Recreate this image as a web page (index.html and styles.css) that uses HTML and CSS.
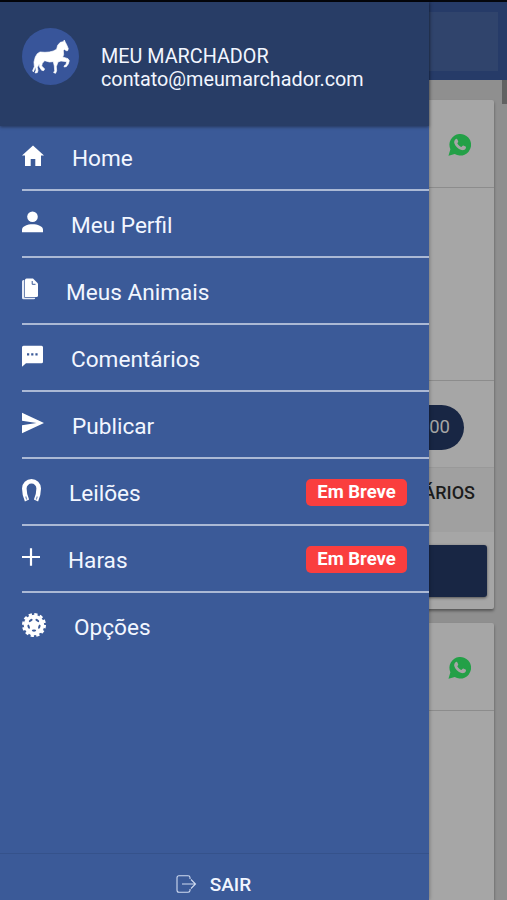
FILE: index.html
```html
<!DOCTYPE html>
<html lang="pt-BR">
<head>
  <meta charset="UTF-8" />
  <meta name="viewport" content="width=device-width, initial-scale=1.0"/>
  <title>Meu Marchador</title>
  <link rel="stylesheet" href="styles.css">
</head>
<body>
  <div class="page">
    <div class="topbar"><div class="search"></div></div>
    <div class="feed">
      <div class="card">
        <div class="card-head">
          <svg class="whatsapp" viewBox="0 0 24 24"><path fill="#23a047" d="M.5 23.800 2.500 17A11.300 11.300 0 1 1 7 22Z"/><path fill="#a6a6a6" d="M8.200 6.200c.5-.5 1.200-.4 1.500.3l.9 2.100c.2.500.1.800-.9 2 1 1.900 2.500 3.200 4.400 4 .8-.8 1.200-1.800 1.900-1.500l2.300 1.100c.7.400.5 1.200.2 1.900-.7 1.500-2.700 2.100-4.400 1.600-3.700-1-6.700-3.900-7.600-7.300-.3-1.600.4-3.200 1.700-4.200z"/></svg>
        </div>
        <div class="card-photo"></div>
        <div class="card-price"><span class="price">00</span></div>
        <div class="card-comments">ÁRIOS</div>
        <div class="card-action"><div class="button"></div></div>
      </div>
      <div class="card">
        <div class="card-head">
          <svg class="whatsapp" viewBox="0 0 24 24"><path fill="#23a047" d="M.5 23.800 2.500 17A11.300 11.300 0 1 1 7 22Z"/><path fill="#a6a6a6" d="M8.200 6.200c.5-.5 1.200-.4 1.500.3l.9 2.100c.2.500.1.800-.9 2 1 1.900 2.500 3.200 4.400 4 .8-.8 1.200-1.800 1.900-1.500l2.300 1.100c.7.400.5 1.200.2 1.900-.7 1.500-2.700 2.100-4.400 1.600-3.700-1-6.700-3.900-7.600-7.300-.3-1.600.4-3.200 1.700-4.200z"/></svg>
        </div>
        <div class="card-photo"></div>
      </div>
    </div>
    <div class="scroll-thumb"></div>
  </div>

  <div class="menu">
    <div class="menu-header">
      <svg class="avatar" viewBox="0 0 57 57">
        <circle cx="28.500" cy="28.500" r="28.500" fill="#38559a"/>
        <path fill="#fff" stroke="#fff" stroke-width="2" transform="translate(8 10) scale(.333)" d="M10 102 8 98 13 86 12 72 16 57 22 47 30 42 45 43 58 42 70 39 80 34 83 22 91 13 100 11 103 6 106 13 110 20 115 32 113 38 109 38 103 34 100 38 101 50 98 57 114 62 118 68 115 78 109 86 102 87 104 82 108 80 110 71 93 69 84 72 79 86 80 98 77 106 71 104 74 98 73 84 70 71 58 72 44 68 37 76 35 84 44 93 41 98 35 97 28 86 28 77 22 88 24 98 22 104 15 105 18 97 17 86Z"/>
      </svg>
      <div class="user">
        <div class="user-name">MEU MARCHADOR</div>
        <div class="user-mail">contato@meumarchador.com</div>
      </div>
    </div>

    <div class="menu-list">
      <div class="item">
        <svg width="22" height="22" viewBox="0 0 22 22"><path fill="#fff" d="M11 .5 22 10.500h-3V21h-5.700v-7H8.700v7H3V10.500H0z"/></svg>
        <span class="label">Home</span>
      </div>
      <div class="item">
        <svg width="21" height="22" viewBox="0 0 21 22"><circle cx="10.500" cy="5.800" r="5.300" fill="#fff"/><path fill="#fff" d="M0 21.300v-2.500c0-3.600 5.500-5.500 10.500-5.500S21 15.200 21 18.800v2.500z"/></svg>
        <span class="label">Meu Perfil</span>
      </div>
      <div class="item">
        <svg width="16" height="22" viewBox="0 0 16 22"><path fill="#fff" d="M4.500.5H11l5 5V17.500q0 1.500-1.500 1.500H3V2Q3 .5 4.500.5z"/><path fill="none" stroke="#3b5a98" d="M10.200 3v3.300h3.300"/><path fill="#e6ebf6" d="M0 3.500Q0 2 1.500 2H2.300v17.700h10.900v.3q0 1.300-1.500 1.300H1.500Q0 21.300 0 19.800z"/></svg>
        <span class="label">Meus Animais</span>
      </div>
      <div class="item">
        <svg width="21" height="22" viewBox="0 0 21 22"><path fill="#fff" d="M1.500.8h18Q21 .8 21 2.300v14.500q0 1.500-1.500 1.500H4L0 21.800V2.300Q0 .8 1.500.8z"/><path fill="#3b5a98" d="M5 8.200h2.200v2.200H5zm4.200 0h2.200v2.200H9.200zm4.200 0h2.200v2.200h-2.200z"/></svg>
        <span class="label">Comentários</span>
      </div>
      <div class="item">
        <svg width="22" height="22" viewBox="0 0 22 22"><path fill="#fff" d="M0 .8 22 11 0 21.300v-8L14.500 11 0 8.800z"/></svg>
        <span class="label">Publicar</span>
      </div>
      <div class="item">
        <svg width="19" height="23" viewBox="0 0 19 23"><path fill="none" stroke="#fff" stroke-width="4.600" d="M5 21.500C3.200 17.500 2.300 14 2.300 9.600a7.200 7.300 0 0 1 14.400 0c0 4.400-.9 7.900-2.700 11.900"/><path fill="none" stroke="#7d93c0" stroke-width="1.200" d="M3.700 17.500l1.100 3M15.300 17.500l-1.100 3"/></svg>
        <span class="label">Leilões</span>
        <span class="badge">Em Breve</span>
      </div>
      <div class="item">
        <svg width="18" height="22" viewBox="0 0 18 22"><path fill="none" stroke="#fff" stroke-width="2.200" d="M9 2.200v17.600M0 11h18"/></svg>
        <span class="label">Haras</span>
        <span class="badge">Em Breve</span>
      </div>
      <div class="item">
        <svg width="24" height="24" viewBox="0 0 24 24"><circle cx="12" cy="12" r="10.300" fill="#fff"/><circle cx="12" cy="12" r="10.800" fill="none" stroke="#fff" stroke-width="2.400" stroke-dasharray="3.250 2.400"/><g fill="#3b5a98"><ellipse id="hole" cx="12" cy="17.600" rx="2.200" ry="1.100"/><use href="#hole" transform="rotate(72 12 12)"/><use href="#hole" transform="rotate(144 12 12)"/><use href="#hole" transform="rotate(216 12 12)"/><use href="#hole" transform="rotate(288 12 12)"/></g></svg>
        <span class="label">Opções</span>
      </div>
    </div>

    <div class="menu-footer">
      <svg width="21" height="18" viewBox="0 0 21 18"><path fill="none" stroke="#cfdaf0" stroke-width="1.100" d="M14 4V2.500Q14 .8 12 .8H3Q1 .8 1 2.800v12.400q0 2 2 2h9q2 0 2-1.700V14M6 9h13.500M15 4.500 19.500 9 15 13.500"/></svg>
      <span>SAIR</span>
    </div>
  </div>
</body>
</html>
```
FILE: styles.css
```css
:root {
  --menu: #3b5a98;
  --menu-dark: #283d66;
  --card: #a6a6a6;
}

* {
  box-sizing: border-box;
}

body {
  margin: 0;
  height: 900px;
  overflow: hidden;
  position: relative;
  background: #8f8f8f;
  font-family: Roboto, sans-serif;
}

.page {
  height: 900px;
  overflow: hidden;
  border-top: 2px solid #05070d;
}

.topbar {
  height: 78px;
  padding: 10px 9px 9px;
  background: #263b68;
}

.search {
  height: 59px;
  background: #30446c;
}

.feed {
  padding: 20px 13px 0;
}

.card {
  margin-bottom: 14px;
  background: var(--card);
  border-radius: 2px;
  box-shadow: 0 2px 3px rgba(0, 0, 0, 0.4);
}

.card-head {
  height: 88px;
  padding: 2px 23px 0 0;
  display: flex;
  align-items: center;
  justify-content: flex-end;
  border-bottom: 1px solid #8c8c8c;
}

.whatsapp {
  width: 23px;
  height: 23px;
}

.card-photo {
  height: 193px;
  border-bottom: 1px solid #8c8c8c;
}

.card-price {
  height: 86px;
  padding: 6px 30px 0 0;
  display: flex;
  align-items: center;
  justify-content: flex-end;
}

.price {
  min-width: 130px;
  height: 45px;
  line-height: 45px;
  padding: 0 14px;
  border-radius: 23px;
  background: #182644;
  color: #a6a6a6;
  font-size: 18.5px;
  text-align: right;
}

.card-comments {
  height: 65px;
  padding: 14px 19px;
  background: #a0a0a0;
  border-top: 1px solid #999;
  color: #1c1c1c;
  font-size: 18px;
  font-weight: 500;
  line-height: 22px;
  text-align: right;
}

.card-action {
  height: 77px;
  padding: 13px 7px;
}

.button {
  height: 52px;
  border-radius: 3px;
  background: #182644;
  box-shadow: 0 1px 3px rgba(0, 0, 0, 0.5);
}

.scroll-thumb {
  position: absolute;
  top: 80px;
  right: 0;
  width: 5px;
  height: 24px;
  background: #626262;
}

/* Menu lateral */
.menu {
  position: absolute;
  top: 2px;
  left: 0;
  width: 429px;
  height: 898px;
  display: flex;
  flex-direction: column;
  background: var(--menu);
  color: #f2f6ff;
  box-shadow: 0 0 4px rgba(0, 0, 0, 0.4);
}

.menu-header {
  height: 124px;
  padding: 26px 22px;
  display: flex;
  gap: 22px;
  background: var(--menu-dark);
  box-shadow: 0 1px 3px rgba(0, 0, 0, 0.4);
}

.avatar {
  width: 57px;
  height: 57px;
}

.user {
  padding-top: 17px;
  font-size: 19.8px;
  line-height: 23px;
}

.menu-list {
  flex: 1;
  padding-left: 22px;
}

.item {
  height: 67px;
  padding: 0 22px 3px 0;
  display: flex;
  align-items: center;
  border-bottom: 2px solid #abb9d5;
}

.item:first-child {
  height: 65px;
}

.item:last-child {
  border-bottom: 0;
}

.label {
  margin-left: 28px;
  padding-top: 7px;
  font-size: 22.600px;
  line-height: 28px;
}

.item:first-child .label,
.item:last-child .label {
  padding-top: 5px;
}

.badge {
  width: 101px;
  height: 27px;
  margin: 4px 0 0 auto;
  border-radius: 5px;
  background: #fa3e3e;
  color: #fff;
  font-size: 18.500px;
  font-weight: 700;
  line-height: 27px;
  text-align: center;
}

.menu-footer {
  height: 47px;
  padding: 14px 2px 0 0;
  display: flex;
  align-items: center;
  justify-content: center;
  gap: 13px;
  border-top: 1px solid #35528b;
  font-size: 19px;
  font-weight: 500;
}
```
